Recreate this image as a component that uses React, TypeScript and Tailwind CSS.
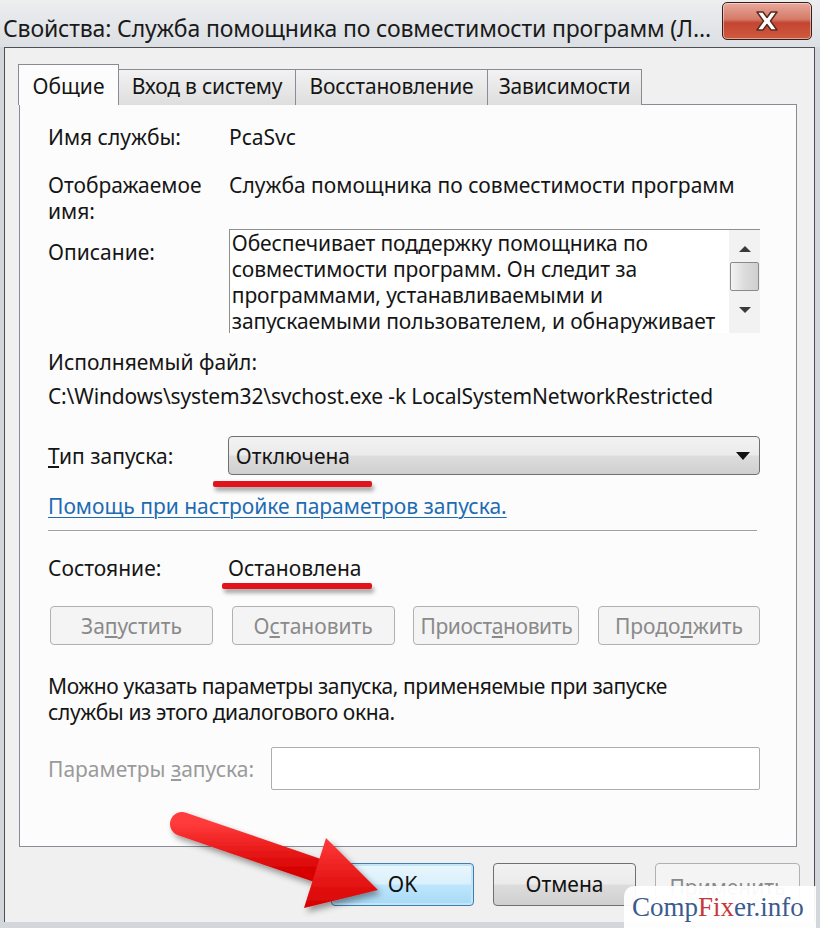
import React from "react";

// Win7 style button
function WinButton({
    children,
    disabled,
    focused,
    className = "",
}: {
    children: React.ReactNode;
    disabled?: boolean;
    focused?: boolean;
    className?: string;
}) {
    let look =
        "border-[#707070] bg-[linear-gradient(#f2f2f2_0%,#ebebeb_49%,#dddddd_51%,#cfcfcf_100%)] text-[#111]";
    if (disabled) look = "border-[#adb2b5] bg-[#f4f4f4] text-[#8a8a8a]";
    if (focused)
        look =
            "border-[#3c7fb1] bg-[linear-gradient(#eaf6fd_0%,#d9f0fc_49%,#bee6fd_51%,#a7d9f5_100%)] text-[#111] shadow-[0_0_0_2px_#c4e5f6_inset]";
    return (
        <div
            className={`flex items-center justify-center rounded-[4px] border text-[21px] ${look} ${className}`}
        >
            {children}
        </div>
    );
}

function Tab({ label, active, className = "" }: { label: string; active?: boolean; className?: string }) {
    if (active) {
        return (
            <div
                className={`relative z-10 flex h-[41px] items-start justify-center border border-b-0 border-[#898c95] bg-[#fcfcfc] pt-[6px] ${className}`}
            >
                {label}
            </div>
        );
    }
    return (
        <div
            className={`flex h-[36px] items-center justify-center border border-b-0 border-[#898c95] bg-[linear-gradient(#f2f2f2,#dedede)] pb-[2px] ${className}`}
        >
            {label}
        </div>
    );
}

export default function App() {
    return (
        <div className="relative h-[928px] w-[820px] overflow-hidden bg-[#d3d6da] font-['Noto_Sans',sans-serif] text-[#151515]">
            {/* Title bar */}
            <div className="flex h-[47px] items-start justify-between bg-[linear-gradient(#eceef0,#dcdfe3)] pl-[3px] pr-[8px]">
                <div className="mt-[13px] whitespace-nowrap text-[23px] leading-[30px] tracking-[-0.15px] text-[#1a1a1a]">
                    Свойства: Служба помощника по совместимости программ (Л...
                </div>
                <div className="mt-[2px] flex h-[38px] w-[90px] items-center justify-center rounded-[5px] border border-[#3a1d18] bg-[linear-gradient(#e8a89a_0%,#d47a68_45%,#c44532_55%,#cf5a3e_100%)] shadow-[inset_0_0_0_1px_rgba(255,255,255,0.45)]">
                    <svg width="34" height="26" viewBox="0 0 34 26">
                        <path
                            d="M7 4 L13 4 L17 9.5 L21 4 L27 4 L20.5 13 L27 22 L21 22 L17 16.5 L13 22 L7 22 L13.5 13 Z"
                            fill="#ffffff"
                            stroke="#5a2a22"
                            strokeWidth="1.5"
                            strokeLinejoin="round"
                        />
                    </svg>
                </div>
            </div>

            {/* Client area */}
            <div className="ml-[4px] h-[875px] w-[811px] border-l border-r border-t border-[#4d4f52] bg-[#f0f0f0]">
                {/* Tabs */}
                <div className="ml-[13px] mt-[16px] flex h-[41px] items-end text-[21px]">
                    <Tab label="Общие" active className="w-[101px]" />
                    <Tab label="Вход в систему" className="-ml-px w-[178px] tracking-[-0.2px]" />
                    <Tab label="Восстановление" className="-ml-px w-[193px] tracking-[-0.2px]" />
                    <Tab label="Зависимости" className="-ml-px w-[155px] tracking-[-0.2px]" />
                </div>

                {/* Panel */}
                <div className="-mt-px ml-[14px] flex h-[743px] w-[778px] flex-col border border-[#898c95] bg-[#fcfcfc] pl-[28px] pr-[36px] pt-[19px] text-[21px] leading-[26px]">
                    <div className="flex">
                        <div className="w-[181px]">Имя службы:</div>
                        <div>PcaSvc</div>
                    </div>
                    <div className="mt-[22px] flex">
                        <div className="w-[181px]">
                            Отображаемое
                            <br />
                            имя:
                        </div>
                        <div>Служба помощника по совместимости программ</div>
                    </div>
                    <div className="mt-[5px] flex">
                        <div className="mt-[10px] w-[181px]">Описание:</div>
                        <div className="flex h-[104px] w-[532px] border-l border-t border-[#8e8f8f] bg-white">
                            <div className="flex-1 overflow-hidden whitespace-nowrap pl-[2px] tracking-[-0.1px]">
                                Обеспечивает поддержку помощника по
                                <br />
                                совместимости программ. Он следит за
                                <br />
                                программами, устанавливаемыми и
                                <br />
                                запускаемыми пользователем, и обнаруживает
                            </div>
                            <div className="flex w-[31px] flex-col items-center bg-[#f2f2f2]">
                                <svg className="mt-[15px]" width="14" height="8" viewBox="0 0 14 8">
                                    <path d="M1 7 L7 1 L13 7 Z" fill="#3a3a3a" />
                                </svg>
                                <div className="mt-[9px] h-[29px] w-[29px] rounded-[2px] border border-[#8a8a8a] bg-[linear-gradient(90deg,#f3f3f3,#dcdcdc_50%,#cfcfcf)]" />
                                <svg className="mt-[15px]" width="14" height="8" viewBox="0 0 14 8">
                                    <path d="M1 1 L13 1 L7 7 Z" fill="#3a3a3a" />
                                </svg>
                            </div>
                        </div>
                    </div>
                    <div className="mt-[16px]">Исполняемый файл:</div>
                    <div className="mt-[8px] whitespace-nowrap tracking-[-0.15px]">
                        C:\Windows\system32\svchost.exe -k LocalSystemNetworkRestricted
                    </div>
                    <div className="mt-[27px] flex items-center">
                        <div className="w-[180px]">
                            <span className="underline">Т</span>ип запуска:
                        </div>
                        <div className="flex h-[39px] w-[533px] items-center justify-between rounded-[4px] border border-[#707070] bg-[linear-gradient(#f2f2f2_0%,#ebebeb_49%,#dddddd_51%,#cfcfcf_100%)] pl-[7px] pr-[9px]">
                            <span>Отключена</span>
                            <svg width="14" height="8" viewBox="0 0 14 8">
                                <path d="M0 0 L14 0 L7 8 Z" fill="#111" />
                            </svg>
                        </div>
                    </div>
                    <div className="mt-[18px] text-[#1d6bb3] underline decoration-1 underline-offset-[3px]">
                        Помощь при настройке параметров запуска.
                    </div>
                    <div className="mr-[3px] mt-[11px] h-[2px] border-t border-[#a0a0a0] bg-white" />
                    <div className="mt-[23px] flex">
                        <div className="w-[180px]">Состояние:</div>
                        <div>Остановлена</div>
                    </div>
                    <div className="ml-[2px] mt-[25px] flex justify-between">
                        <WinButton disabled className="h-[39px] w-[163px]">
                            За<span className="underline">п</span>устить
                        </WinButton>
                        <WinButton disabled className="h-[39px] w-[163px]">
                            О<span className="underline">с</span>тановить
                        </WinButton>
                        <WinButton disabled className="h-[39px] w-[166px] tracking-[-0.4px]">
                            Приост<span className="underline">а</span>новить
                        </WinButton>
                        <WinButton disabled className="h-[39px] w-[162px]">
                            Продо<span className="underline">л</span>жить
                        </WinButton>
                    </div>
                    <div className="mt-[28px] tracking-[-0.4px]">
                        Можно указать параметры запуска, применяемые при запуске
                        <br />
                        службы из этого диалогового окна.
                    </div>
                    <div className="mt-[22px] flex items-center">
                        <div className="w-[223px] whitespace-nowrap text-[#9a9a9a]">
                            Параметры <span className="underline">з</span>апуска:
                        </div>
                        <div className="h-[43px] w-[490px] rounded-[2px] border border-[#abadb3] bg-white" />
                    </div>
                </div>

                {/* Bottom buttons */}
                <div className="mr-[14px] mt-[16px] flex justify-end gap-[19px]">
                    <WinButton focused className="h-[43px] w-[143px]">
                        OK
                    </WinButton>
                    <WinButton className="h-[43px] w-[143px]">Отмена</WinButton>
                    <WinButton disabled className="h-[43px] w-[145px] items-start pt-[8px]">
                        Применить
                    </WinButton>
                </div>
            </div>

            {/* Red underline annotations */}
            <div className="absolute left-[213px] top-[481px] h-[6px] w-[159px] rounded-[2px] bg-[#e3131b] shadow-[2px_4px_4px_rgba(0,0,0,0.35)]" />
            <div className="absolute left-[222px] top-[583px] h-[6px] w-[150px] rounded-[2px] bg-[#e3131b] shadow-[2px_4px_4px_rgba(0,0,0,0.35)]" />

            {/* Red arrow */}
            <svg className="pointer-events-none absolute left-0 top-0" width="820" height="928" viewBox="0 0 820 928">
                <defs>
                    <linearGradient id="arrowRed" x1="0" y1="0" x2="0" y2="1">
                        <stop offset="0" stopColor="#ff3a3a" />
                        <stop offset="1" stopColor="#d60000" />
                    </linearGradient>
                    <filter id="arrowShadow" x="-20%" y="-20%" width="140%" height="140%">
                        <feDropShadow dx="3" dy="4" stdDeviation="3" floodColor="#000" floodOpacity="0.4" />
                    </filter>
                </defs>
                <g filter="url(#arrowShadow)">
                    <line x1="182" y1="824" x2="322" y2="872" stroke="url(#arrowRed)" strokeWidth="24" strokeLinecap="round" />
                    <polygon points="326,838 304,908 378,890" fill="url(#arrowRed)" />
                </g>
            </svg>

            {/* Watermark */}
            <div className="absolute left-[624px] top-[886px] flex h-[42px] w-[192px] items-center rounded-tl-[10px] bg-white/95 pl-[8px] font-['Liberation_Serif',serif] text-[27px] leading-[30px]">
                <span className="text-[#3b5b8e]">Comp</span>
                <span className="text-[#c9373a]">Fix</span>
                <span className="text-[#3b5b8e]">er.info</span>
            </div>
        </div>
    );
}
